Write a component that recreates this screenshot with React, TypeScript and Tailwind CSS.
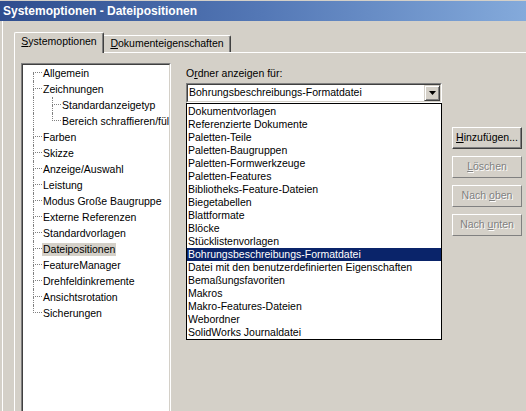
// Systemoptionen dialog — Win2000 classic look, Dateipositionen page with the folder combo open.

const font = "font-['Liberation_Sans',Arial,sans-serif]";

type TreeItem = { label: string; level: 0 | 1; first?: boolean; last?: boolean; selected?: boolean };

const tree: TreeItem[] = [
  { label: "Allgemein", level: 0, first: true },
  { label: "Zeichnungen", level: 0 },
  { label: "Standardanzeigetyp", level: 1, first: true },
  { label: "Bereich schraffieren/füllen", level: 1, last: true },
  { label: "Farben", level: 0 },
  { label: "Skizze", level: 0 },
  { label: "Anzeige/Auswahl", level: 0 },
  { label: "Leistung", level: 0 },
  { label: "Modus Große Baugruppe", level: 0 },
  { label: "Externe Referenzen", level: 0 },
  { label: "Standardvorlagen", level: 0 },
  { label: "Dateipositionen", level: 0, selected: true },
  { label: "FeatureManager", level: 0 },
  { label: "Drehfeldinkremente", level: 0 },
  { label: "Ansichtsrotation", level: 0 },
  { label: "Sicherungen", level: 0, last: true },
];

const folders = [
  "Dokumentvorlagen",
  "Referenzierte Dokumente",
  "Paletten-Teile",
  "Paletten-Baugruppen",
  "Paletten-Formwerkzeuge",
  "Paletten-Features",
  "Bibliotheks-Feature-Dateien",
  "Biegetabellen",
  "Blattformate",
  "Blöcke",
  "Stücklistenvorlagen",
  "Bohrungsbeschreibungs-Formatdatei",
  "Datei mit den benutzerdefinierten Eigenschaften",
  "Bemaßungsfavoriten",
  "Makros",
  "Makro-Features-Dateien",
  "Webordner",
  "SolidWorks Journaldatei",
];

function TreeRow({ item }: { item: TreeItem }) {
  const topFirst = item.level === 0 && item.first;
  return (
    <div className="flex h-[16px] items-stretch whitespace-nowrap">
      <div className="w-[10px] shrink-0" />
      {item.level === 1 && <div className="w-[19px] shrink-0 border-l border-dotted border-[#808080]" />}
      <div className="flex w-[9px] shrink-0 flex-col">
        <div
          className={
            topFirst
              ? "h-[8px] border-b border-dotted border-[#808080]"
              : "h-[8px] border-b border-l border-dotted border-[#808080]"
          }
        />
        <div className={item.last ? "flex-1" : "flex-1 border-l border-dotted border-[#808080]"} />
      </div>
      <span
        className={
          item.selected
            ? "self-center bg-[#d4d0c8] px-[1px] text-[10.5px] leading-[13px] text-black"
            : "self-center px-[1px] text-[10.5px] leading-[13px] text-black"
        }
      >
        {item.label}
      </span>
    </div>
  );
}

function Button({ children, disabled = false }: { children: React.ReactNode; disabled?: boolean }) {
  return (
    <div
      className={
        disabled
          ? "flex h-[22px] w-[70px] items-center justify-center border border-t-white border-l-white border-r-[#808080] border-b-[#808080] text-[10.5px] text-[#808080] [text-shadow:1px_1px_0_#ffffff]"
          : "flex h-[22px] w-[70px] items-center justify-center border border-t-white border-l-white border-r-[#404040] border-b-[#404040] text-[10.5px] text-black shadow-[inset_-1px_-1px_0_#808080]"
      }
    >
      {children}
    </div>
  );
}

export default function App() {
  return (
    <div className={`h-[411px] w-[526px] overflow-hidden bg-[#d4d0c8] pt-[1px] ${font}`}>
      {/* title bar */}
      <div className="flex h-[20px] items-center bg-gradient-to-r from-[#2e4d8e] via-[#5478b6] to-[#84aadb] pl-[3px]">
        <span className="text-[12px] font-bold text-white">Systemoptionen - Dateipositionen</span>
      </div>

      <div className="ml-[2px] h-full border-l border-white pl-[11px] pt-[11px]">
        {/* tabs */}
        <div className="flex h-[20px] items-end">
          <div className="relative z-10 mb-[-1px] flex h-[21px] w-[90px] items-center justify-center rounded-t-[2px] border-t border-l border-white bg-[#d4d0c8] shadow-[inset_-1px_0_0_#808080] [border-right:1px_solid_#404040] pb-[2px] text-[10.5px] text-black">
            <span>
              <u>S</u>ystemoptionen
            </span>
          </div>
          <div className="flex h-[17px] w-[127px] items-center justify-center rounded-tr-[2px] border-t border-white shadow-[inset_-1px_0_0_#808080] [border-right:1px_solid_#404040] text-[10.5px] text-black">
            <span>
              <u>D</u>okumenteigenschaften
            </span>
          </div>
        </div>

        {/* tab page */}
        <div className="flex h-[400px] items-start border-t border-l border-white pl-[6px] pt-[10px]">
          {/* tree */}
          <div className="h-[360px] w-[150px] shrink-0 border border-t-[#808080] border-l-[#808080] border-r-white border-b-white">
            <div className="h-full overflow-hidden border border-t-[#404040] border-l-[#404040] border-r-[#d4d0c8] border-b-[#d4d0c8] bg-white">
              {tree.map((item) => (
                <TreeRow key={item.label} item={item} />
              ))}
            </div>
          </div>

          {/* right side */}
          <div className="ml-[15px] flex flex-col">
            <div className="mt-[4px] text-[10.5px] leading-[13px] text-black">
              O<u>r</u>dner anzeigen für:
            </div>
            <div className="mt-[3px] flex items-start">
              <div className="relative w-[256px]">
                <div className="h-[20px] border border-t-[#808080] border-l-[#808080] border-r-white border-b-white">
                  <div className="flex h-full items-center border border-t-[#404040] border-l-[#404040] border-r-[#d4d0c8] border-b-[#d4d0c8] bg-white">
                    <span className="flex-1 pl-[1px] text-[10.5px] text-black">Bohrungsbeschreibungs-Formatdatei</span>
                    <div className="flex h-[16px] w-[16px] items-center justify-center border border-t-[#d4d0c8] border-l-[#d4d0c8] border-r-[#404040] border-b-[#404040] bg-[#d4d0c8] shadow-[inset_1px_1px_0_#ffffff,inset_-1px_-1px_0_#808080]">
                      <svg width="7" height="4" viewBox="0 0 7 4">
                        <polygon points="0,0 7,0 3.5,4" fill="#000" />
                      </svg>
                    </div>
                  </div>
                </div>

                {/* open dropdown list */}
                <div className="absolute left-0 top-full z-20 w-full border border-black bg-white pt-[1px]">
                  {folders.map((f) => (
                    <div
                      key={f}
                      className={
                        f === "Bohrungsbeschreibungs-Formatdatei"
                          ? "h-[13px] whitespace-nowrap bg-[#0a246a] pl-[1px] text-[10.5px] leading-[13px] text-white"
                          : "h-[13px] whitespace-nowrap pl-[1px] text-[10.5px] leading-[13px] text-black"
                      }
                    >
                      {f}
                    </div>
                  ))}
                </div>
              </div>

              <div className="ml-[10px] mt-[44px] flex flex-col gap-[7px]">
                <Button>
                  <span>
                    <u>H</u>inzufügen...
                  </span>
                </Button>
                <Button disabled>
                  <span>
                    <u>L</u>öschen
                  </span>
                </Button>
                <Button disabled>
                  <span>
                    Nach <u>o</u>ben
                  </span>
                </Button>
                <Button disabled>
                  <span>
                    Nach <u>u</u>nten
                  </span>
                </Button>
              </div>
            </div>
          </div>
        </div>
      </div>
    </div>
  );
}
